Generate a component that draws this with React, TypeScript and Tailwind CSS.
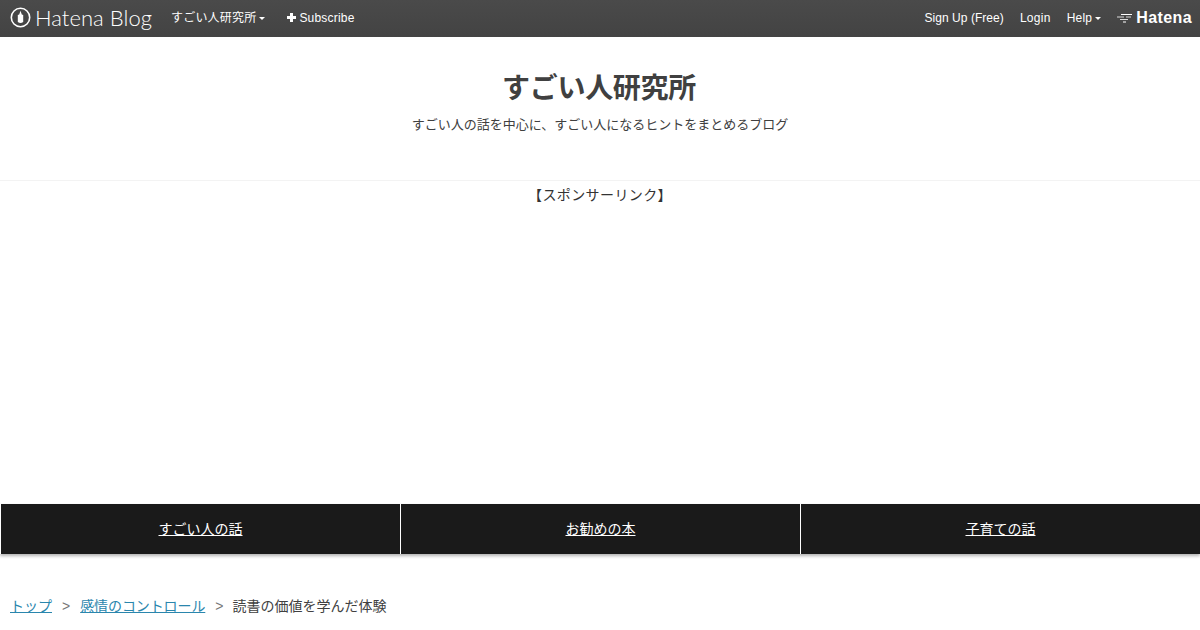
const cjk = "font-['Liberation_Sans','Noto_Sans_CJK_JP',sans-serif]";

const Caret = () => (
  <span className="ml-[3px] inline-block border-x-[3px] border-t-[3px] border-x-transparent border-t-white align-middle" />
);

const BlogMark = () => (
  <svg width="21" height="21" viewBox="0 0 21 21" className="shrink-0">
    <circle cx="10.5" cy="10.5" r="9.2" fill="none" stroke="#fff" strokeWidth="1.6" />
    <path d="M7.8 8 L9.2 7.4 L10.5 3.8 L11.8 7.4 L13.2 8 V15 Q10.5 17 7.8 15 Z" fill="#fff" />
  </svg>
);

const HatenaMark = () => (
  <svg width="16" height="12" viewBox="0 0 16 12" className="shrink-0">
    <g stroke="#fff" strokeWidth="1" fill="none">
      <path d="M4 2.5 H15" />
      <path d="M0 5 H7 M9 5 H14" opacity="0.8" />
      <path d="M3 7.5 H11" opacity="0.8" />
      <path d="M6 10 H9" />
    </g>
  </svg>
);

const PlusMark = () => (
  <svg width="9" height="9" viewBox="0 0 9 9" className="mr-[3px] shrink-0">
    <path d="M3 0 H6 V3 H9 V6 H6 V9 H3 V6 H0 V3 H3 Z" fill="#fff" />
  </svg>
);

const menu = ["すごい人の話", "お勧めの本", "子育ての話"];

const App = () => {
  return (
    <div className={`h-[630px] w-[1200px] overflow-hidden bg-white ${cjk}`}>
      <header className="flex h-[37px] items-center justify-between bg-gradient-to-b from-[#4a4a4a] to-[#434343] pb-[2px] text-xs text-white">
        <div className="flex items-center">
          <div className="ml-[10px] flex items-center gap-[4px]">
            <BlogMark />
            <span className="font-['Lato',sans-serif] text-[22px] leading-none font-light tracking-[0.05px]">Hatena Blog</span>
          </div>
          <span className="ml-[19px] tracking-[0.2px]">すごい人研究所<Caret /></span>
          <span className="ml-[22px] flex items-center tracking-[0.2px]">
            <PlusMark />Subscribe
          </span>
        </div>
        <div className="flex items-center">
          <span className="tracking-[0.05px]">Sign Up (Free)</span>
          <span className="ml-4 tracking-[0.3px]">Login</span>
          <span className="ml-4 tracking-[0.2px]">Help<Caret /></span>
          <div className="mr-2 ml-4 flex items-center gap-[3px]">
            <HatenaMark />
            <span className="text-[16px] leading-none font-bold tracking-[0.4px]">Hatena</span>
          </div>
        </div>
      </header>

      <div className="flex h-[144px] flex-col items-center border-b border-[#f3f3f3] text-[#404040]">
        <h1 className="mt-[34px] mr-[2px] text-[28px] leading-9 tracking-[-0.3px] font-bold">すごい人研究所</h1>
        <p className="mt-[8px] text-[13px] leading-5">すごい人の話を中心に、すごい人になるヒントをまとめるブログ</p>
      </div>

      <div className="h-[323px] pt-[4px] text-center text-sm leading-5 tracking-[0.4px] text-[#333]">【スポンサーリンク】</div>

      <nav className="flex h-[50px] pl-[1px] shadow-[0_2px_3px_rgba(0,0,0,0.3)]">
        {menu.map((item, i) => (
          <div
            key={item}
            className={`flex flex-1 items-center justify-center bg-[#1a1a1a] text-sm text-white underline ${i > 0 ? "border-l border-white" : ""}`}
          >
            {item}
          </div>
        ))}
      </nav>

      <div className="mt-[42px] flex items-center pl-[10px] text-sm leading-5 text-[#404040]">
        <span className="text-[#2a86ad] underline">トップ</span>
        <span className="mx-[10px] text-[#777]">&gt;</span>
        <span className="tracking-[-0.1px] text-[#2a86ad] underline">感情のコントロール</span>
        <span className="mr-[9px] ml-[10px] text-[#777]">&gt;</span>
        <span>読書の価値を学んだ体験</span>
      </div>
    </div>
  );
};

export default App;
